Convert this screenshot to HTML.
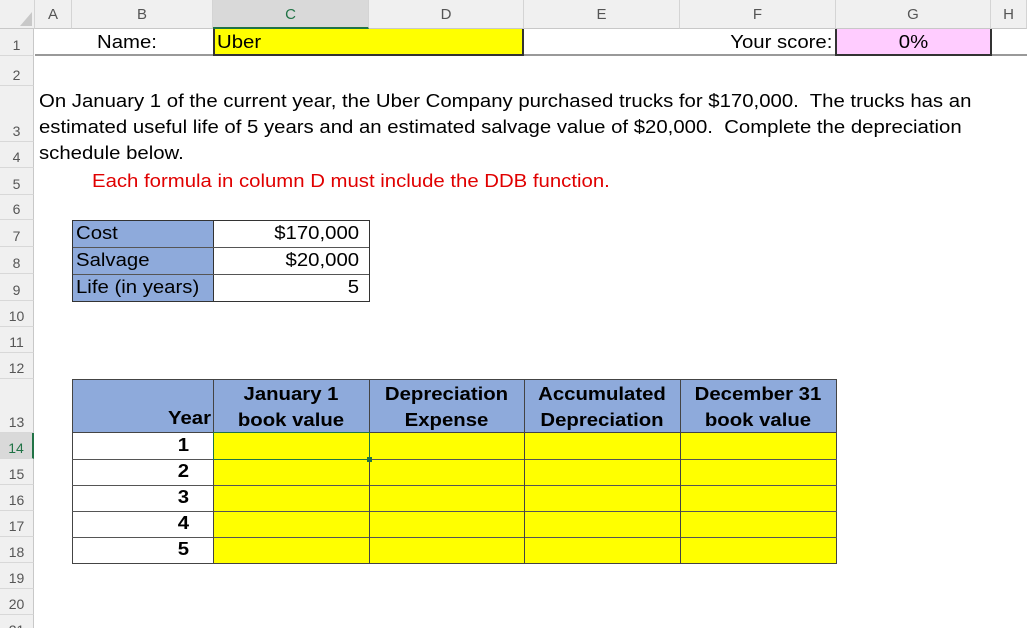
<!DOCTYPE html>
<html><head><style>
*{margin:0;padding:0;box-sizing:border-box}
html,body{width:1027px;height:628px;overflow:hidden}
body{background:#fff;font-family:"Liberation Sans",Arial,sans-serif;position:relative}
.a{position:absolute}
.ch{position:absolute;top:0;height:29px;background:#f0f0f0;border-right:1px solid #d4d4d4;border-bottom:1px solid #c8c8c8;color:#555;font-size:15px;text-align:center;line-height:30px}
.rh{position:absolute;left:0;width:34px;background:#f0f0f0;border-bottom:1px solid #d8d8d8;border-right:1px solid #c8c8c8;color:#555;font-size:14px;text-align:center;display:flex;align-items:flex-end;justify-content:center;padding-bottom:2px}
.c{position:absolute;font-size:18px;color:#000;white-space:nowrap;transform:scaleX(1.13);transform-origin:left}
.r{transform-origin:right}
.m{transform-origin:center}
</style></head><body>
<div class="ch" style="left:0;width:35px"></div>
<svg class="a" style="left:20px;top:12px" width="12" height="14"><polygon points="12,0 12,14 0,14" fill="#c8c8c8"/></svg>
<div class="ch" style="left:35px;width:37px">A</div>
<div class="ch" style="left:72px;width:141px">B</div>
<div class="ch" style="left:213px;width:156px;background:#d9d9d9;color:#217346;border-bottom:2px solid #217346">C</div>
<div class="ch" style="left:369px;width:155px">D</div>
<div class="ch" style="left:524px;width:156px">E</div>
<div class="ch" style="left:680px;width:156px">F</div>
<div class="ch" style="left:836px;width:155px">G</div>
<div class="ch" style="left:991px;width:36px">H</div>

<div class="rh" style="top:29px;height:27px">1</div>
<div class="rh" style="top:56px;height:30px">2</div>
<div class="rh" style="top:86px;height:56px">3</div>
<div class="rh" style="top:142px;height:26px">4</div>
<div class="rh" style="top:168px;height:27px">5</div>
<div class="rh" style="top:195px;height:25px">6</div>
<div class="rh" style="top:220px;height:27px">7</div>
<div class="rh" style="top:247px;height:27px">8</div>
<div class="rh" style="top:274px;height:27px">9</div>
<div class="rh" style="top:301px;height:26px">10</div>
<div class="rh" style="top:327px;height:26px">11</div>
<div class="rh" style="top:353px;height:26px">12</div>
<div class="rh" style="top:379px;height:54px">13</div>
<div class="rh" style="top:433px;height:26px;background:#d9d9d9;color:#217346;border-right:2px solid #217346">14</div>
<div class="rh" style="top:459px;height:26px">15</div>
<div class="rh" style="top:485px;height:26px">16</div>
<div class="rh" style="top:511px;height:26px">17</div>
<div class="rh" style="top:537px;height:26px">18</div>
<div class="rh" style="top:563px;height:26px">19</div>
<div class="rh" style="top:589px;height:26px">20</div>
<div class="rh" style="top:615px;height:26px">21</div>

<!-- row 1 -->
<div class="a" style="left:35px;top:29px;width:992px;height:27px;border-bottom:2px solid #999"></div>
<div class="c" style="left:97px;top:32px">Name:</div>
<div class="a" style="left:213px;top:29px;width:311px;height:27px;background:#ffff00;border-left:2px solid #333;border-right:2px solid #333;border-bottom:2px solid #333"></div>
<div class="c" style="left:217px;top:32px">Uber</div>
<div class="c r" style="right:195px;top:32px">Your score:</div>
<div class="a" style="left:835px;top:29px;width:157px;height:27px;background:#ffccff;border-left:2px solid #333;border-right:2px solid #333;border-bottom:2px solid #333"></div>
<div class="c m" style="left:836px;top:32px;width:155px;text-align:center">0%</div>

<div class="c" style="left:39px;top:88px;line-height:26px">On January 1 of the current year, the Uber Company purchased trucks for $170,000.&nbsp; The trucks has an<br>estimated useful life of 5 years and an estimated salvage value of $20,000.&nbsp; Complete the depreciation<br>schedule below.</div>
<div class="c" style="left:92px;top:171px;color:#e00000">Each formula in column D must include the DDB function.</div>

<!-- info table -->
<div class="a" style="left:72px;top:220px;width:298px;height:82px;border:1.5px solid #333"></div>
<div class="a" style="left:73px;top:221px;width:141px;height:80px;background:#8eaadb;border-right:1.5px solid #333"></div>
<div class="a" style="left:73px;top:247px;width:296px;border-top:1px solid #555"></div>
<div class="a" style="left:73px;top:274px;width:296px;border-top:1px solid #555"></div>
<div class="c" style="left:76px;top:223px">Cost</div>
<div class="c" style="left:76px;top:250px">Salvage</div>
<div class="c" style="left:76px;top:277px">Life (in years)</div>
<div class="c r" style="right:668px;top:223px">$170,000</div>
<div class="c r" style="right:668px;top:250px">$20,000</div>
<div class="c r" style="right:668px;top:277px">5</div>

<!-- schedule -->
<div class="a" style="left:72px;top:379px;width:765px;height:54px;background:#8eaadb"></div>
<div class="a" style="left:213px;top:433px;width:624px;height:130px;background:#ffff00"></div>
<div class="a" style="left:72px;top:379px;width:765px;height:185px;border:1.5px solid #444"></div>
<div class="a" style="left:72px;top:432px;width:765px;border-top:1.5px solid #444"></div>
<div class="a" style="left:72px;top:459px;width:765px;border-top:1px solid #555"></div>
<div class="a" style="left:72px;top:485px;width:765px;border-top:1px solid #555"></div>
<div class="a" style="left:72px;top:511px;width:765px;border-top:1px solid #555"></div>
<div class="a" style="left:72px;top:537px;width:765px;border-top:1px solid #555"></div>
<div class="a" style="left:213px;top:379px;height:185px;border-left:1.5px solid #444"></div>
<div class="a" style="left:369px;top:379px;height:185px;border-left:1px solid #444"></div>
<div class="a" style="left:524px;top:379px;height:185px;border-left:1px solid #444"></div>
<div class="a" style="left:680px;top:379px;height:185px;border-left:1px solid #444"></div>
<div class="a" style="left:213px;top:432px;width:157px;height:28px;border:1.5px solid #217346"></div>
<div class="a" style="left:367px;top:457px;width:5px;height:5px;background:#217346"></div>
<div class="c r" style="right:816px;top:408px;font-weight:bold">Year</div>
<div class="c m" style="left:213px;top:381px;width:156px;text-align:center;font-weight:bold;line-height:26px">January 1<br>book value</div>
<div class="c m" style="left:369px;top:381px;width:155px;text-align:center;font-weight:bold;line-height:26px">Depreciation<br>Expense</div>
<div class="c m" style="left:524px;top:381px;width:156px;text-align:center;font-weight:bold;line-height:26px">Accumulated<br>Depreciation</div>
<div class="c m" style="left:680px;top:381px;width:156px;text-align:center;font-weight:bold;line-height:26px">December 31<br>book value</div>
<div class="c r" style="right:838px;top:435px;font-weight:bold">1</div>
<div class="c r" style="right:838px;top:461px;font-weight:bold">2</div>
<div class="c r" style="right:838px;top:487px;font-weight:bold">3</div>
<div class="c r" style="right:838px;top:513px;font-weight:bold">4</div>
<div class="c r" style="right:838px;top:539px;font-weight:bold">5</div>
</body></html>
